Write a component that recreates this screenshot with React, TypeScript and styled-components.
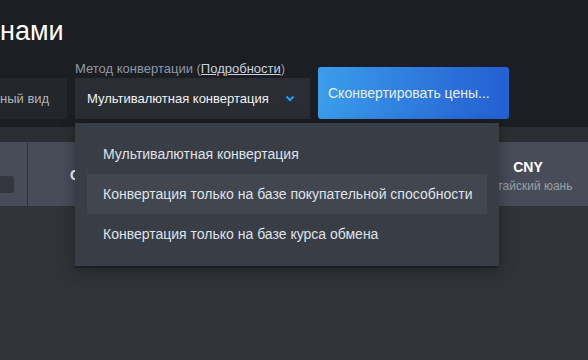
import React from 'react';
import styled, { createGlobalStyle } from 'styled-components';

// --- Estilos globais ---
const GlobalStyle = createGlobalStyle`
  html, body {
    margin: 0;
    padding: 0;
    background: #313338;
  }
  body {
    font-family: "Liberation Sans", Arial, sans-serif;
  }
`;

const Page = styled.div`
  min-height: 100vh;
  display: flex;
  flex-direction: column;
  background: #313338;
  overflow: hidden;
`;

const Header = styled.header`
  background: #1c1e23;
  padding: 13px 0 8px 0;
  display: flex;
  flex-direction: column;
  gap: 12px;
`;

const Title = styled.h1`
  margin: 0;
  font-size: 27px;
  line-height: 36px;
  font-weight: 400;
  color: #ffffff;
`;

const Controls = styled.div`
  display: flex;
  align-items: flex-end;
  gap: 8px;
`;

const ViewToggle = styled.div`
  width: 67px;
  height: 41px;
  flex-shrink: 0;
  box-sizing: border-box;
  display: flex;
  align-items: center;
  background: #23262b;
  color: #aeb4ba;
  font-size: 13px;
  white-space: nowrap;
`;

const Field = styled.div`
  position: relative;
  display: flex;
  flex-direction: column;
  gap: 1px;
`;

const Label = styled.label`
  font-size: 13px;
  line-height: 16px;
  color: #8d9aa9;
  white-space: nowrap;

  a {
    color: #c7d3de;
    text-decoration: underline;
  }
`;

const Select = styled.div`
  width: 235px;
  height: 41px;
  box-sizing: border-box;
  padding: 0 15px 0 12px;
  display: flex;
  align-items: center;
  justify-content: space-between;
  background: #2a2d33;
  color: #f2f2f2;
  font-size: 13px;
  white-space: nowrap;
`;

const ConvertButton = styled.button`
  width: 191px;
  height: 52px;
  flex-shrink: 0;
  border: none;
  border-radius: 3px;
  padding: 0 10px;
  text-align: left;
  font-family: inherit;
  font-size: 14px;
  white-space: nowrap;
  color: #e6eef8;
  background: linear-gradient(90deg, #3b9deb 0%, #2a6fd9 70%, #2360d2 100%);
`;

const Menu = styled.div`
  position: absolute;
  top: calc(100% + 4px);
  left: 0;
  width: 424px;
  box-sizing: border-box;
  padding: 11px 12px 12px;
  background: #393d46;
  box-shadow: 0 2px 0 rgba(0, 0, 0, 0.25), 0 4px 14px rgba(0, 0, 0, 0.35);
  z-index: 10;
`;

const MenuItem = styled.div<{ $active?: boolean }>`
  height: 40px;
  padding: 0 16px;
  display: flex;
  align-items: center;
  font-size: 14px;
  white-space: nowrap;
  color: #dfe3e8;
  background: ${(p) => (p.$active ? '#42464f' : 'transparent')};
`;

const Band = styled.div`
  height: 15px;
  background: #2c2e33;
`;

const TableHead = styled.div`
  height: 64px;
  display: flex;
  background: #484c58;
`;

const SelectCell = styled.div`
  width: 28px;
  flex-shrink: 0;
  border-right: 1px solid #30333a;
  display: flex;
  align-items: flex-end;
  padding-bottom: 13px;
  box-sizing: border-box;
`;

const MiniInput = styled.div`
  width: 14px;
  height: 17px;
  border-radius: 0 3px 3px 0;
  background: #33363d;
`;

const NameCell = styled.div`
  width: 450px;
  flex-shrink: 0;
  padding: 2px 0 0 42px;
  box-sizing: border-box;
  display: flex;
  align-items: center;
  font-size: 14px;
  font-weight: 700;
  color: #ffffff;
`;

const CurrencyCell = styled.div`
  width: 100px;
  flex-shrink: 0;
  padding-top: 4px;
  display: flex;
  flex-direction: column;
  align-items: center;
  justify-content: center;
  gap: 2px;
`;

const Code = styled.span`
  font-size: 14px;
  line-height: 18px;
  font-weight: 700;
  color: #ffffff;
`;

const CurrencyName = styled.span`
  font-size: 12px;
  line-height: 16px;
  color: #9aa0a8;
  white-space: nowrap;
`;

const Chevron = () => (
  <svg width="10" height="7" viewBox="0 0 10 7">
    <polyline points="1.5,1.5 5,5 8.5,1.5" fill="none" stroke="#1a9fff" strokeWidth="2" />
  </svg>
);

const currencies = [{ code: 'CNY', name: 'Китайский юань' }];

const options = [
  'Мультивалютная конвертация',
  'Конвертация только на базе покупательной способности',
  'Конвертация только на базе курса обмена',
];

const App: React.FC = () => {
  return (
    <Page>
      <GlobalStyle />
      <Header>
        <Title>нами</Title>
        <Controls>
          <ViewToggle>ный вид</ViewToggle>
          <Field>
            <Label>
              Метод конвертации (<a>Подробности</a>)
            </Label>
            <Select>
              <span>Мультивалютная конвертация</span>
              <Chevron />
            </Select>
            <Menu>
              {options.map((opt, i) => (
                <MenuItem key={opt} $active={i === 1}>
                  {opt}
                </MenuItem>
              ))}
            </Menu>
          </Field>
          <ConvertButton>Сконвертировать цены...</ConvertButton>
        </Controls>
      </Header>
      <Band />
      <TableHead>
        <SelectCell>
          <MiniInput />
        </SelectCell>
        <NameCell>Страна</NameCell>
        {currencies.map((c) => (
          <CurrencyCell key={c.code}>
            <Code>{c.code}</Code>
            <CurrencyName>{c.name}</CurrencyName>
          </CurrencyCell>
        ))}
      </TableHead>
    </Page>
  );
};

export default App;
